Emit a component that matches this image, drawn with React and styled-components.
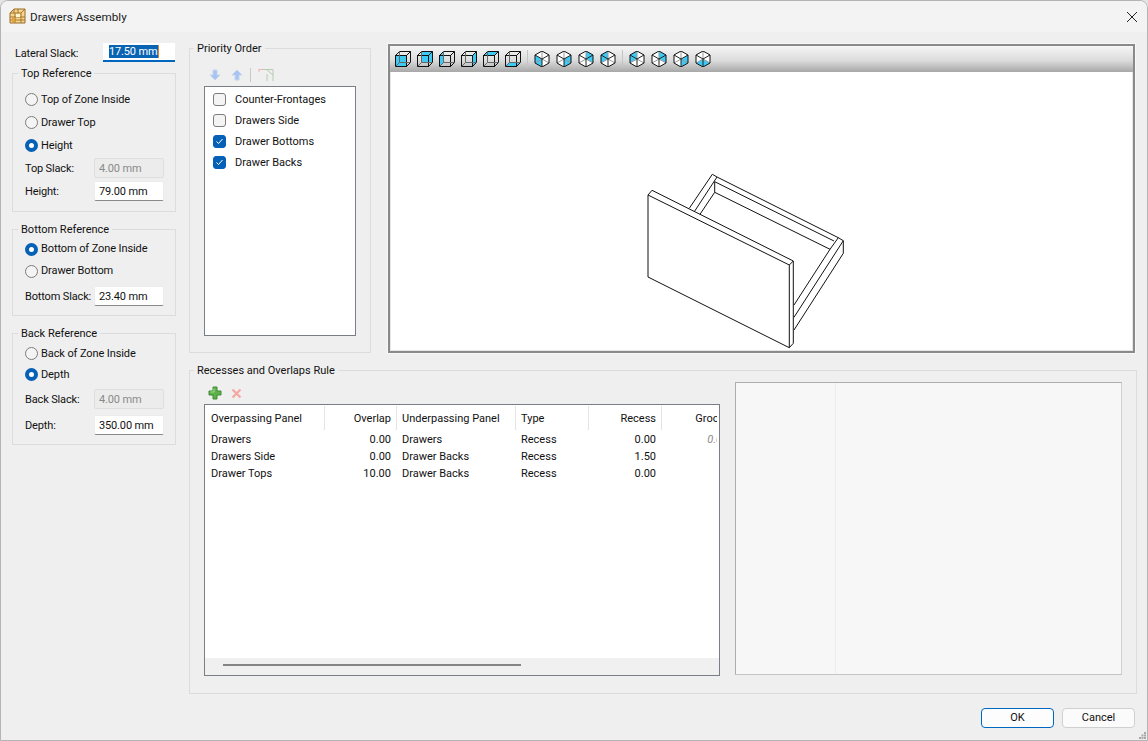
import React from "react";
import styled, { createGlobalStyle } from "styled-components";

const Global = createGlobalStyle`
  * { box-sizing: border-box; }
  html, body { margin: 0; padding: 0; background: #e4e4e4; }
  body { font: 11px/14px Roboto, "Noto Sans", sans-serif; color: #111; overflow: hidden; }
`;

const HEX = { ul: [1, 4], ur: [15, 4], lr: [15, 12], bt: [8, 16], ll: [1, 12], tp: [8, 0], c: [8, 8] };
const pts = (...names) => names.map((n) => HEX[n].join(",")).join(" ");

const BOX_FACES = {
  front: "0.5,4.5 11.5,4.5 11.5,15.5 0.5,15.5",
  back: "4.5,0.5 15.5,0.5 15.5,11.5 4.5,11.5",
  left: "0.5,4.5 4.5,0.5 4.5,11.5 0.5,15.5",
  right: "11.5,4.5 15.5,0.5 15.5,11.5 11.5,15.5",
  top: "0.5,4.5 4.5,0.5 15.5,0.5 11.5,4.5",
  bottom: "0.5,15.5 4.5,11.5 15.5,11.5 11.5,15.5",
};

const ISO_FACES = {
  a: pts("ul", "c", "bt", "ll"),
  b: pts("c", "ur", "lr", "bt"),
  c: "8,8 8,0 15,4 15,12",
  d: "8,8 8,0 1,4 1,12",
  e: pts("tp", "c", "ll", "ul"),
  f: pts("tp", "ur", "lr", "c"),
  g: "8,8 15,4 15,12 8,16",
  h: "1,12 8,8 15,12 8,16",
};

const BoxIcon = ({ face }) => (
  <svg width="16" height="16" viewBox="0 0 16 16">
    <polygon points={BOX_FACES[face]} fill="#3fcaf4" />
    <g fill="none" stroke="#111" strokeWidth="1">
      <rect x="0.5" y="4.5" width="11" height="11" />
      <path d="M0.5 4.5 L4.5 0.5 H15.5 V11.5 L11.5 15.5 M11.5 4.5 L15.5 0.5" />
      <path d="M4.5 0.5 V11.5 H15.5 M4.5 11.5 L0.5 15.5" stroke="#666" />
    </g>
  </svg>
);

const IsoIcon = ({ face }) => (
  <svg width="16" height="16" viewBox="0 0 16 16">
    <polygon points={pts("tp", "ur", "lr", "bt", "ll", "ul")} fill="#fff" />
    <polygon points={ISO_FACES[face]} fill="#3fcaf4" />
    <path d="M8 8 L1 12 M8 8 L15 12 M8 8 V0" stroke="#999" fill="none" />
    <path d="M8 8 L1 4 M8 8 L15 4 M8 8 V16" stroke="#222" fill="none" />
    <polygon points={pts("tp", "ur", "lr", "bt", "ll", "ul")} fill="none" stroke="#111" />
  </svg>
);

const TitleIcon = () => (
  <svg width="17" height="17" viewBox="0 0 17 17">
    <path d="M1 5 L5 1 H16 V15 H1 Z" fill="#f3d693" stroke="#9b6a22" />
    <path d="M1 5 H12 V15 M5 1 V5 M9 1 V5 M12 5 L16 1 M1 9 H12 M1 12 H12 M6 5 V15 M12 9 H16 M12 12 H16" fill="none" stroke="#a8742a" />
    <rect x="3" y="10" width="3" height="4" fill="#e2a23c" />
    <rect x="7" y="6" width="4" height="3" fill="#fff3d0" />
  </svg>
);

const ArrowIcon = ({ up }) => (
  <svg width="12" height="12" viewBox="0 0 12 12">
    <polygon
      points={up ? "6,1 11,6 8,6 8,11 4,11 4,6 1,6" : "6,11 11,6 8,6 8,1 4,1 4,6 1,6"}
      fill="#a9c4f0"
      stroke="#c3d4ef"
    />
  </svg>
);

const FilterIcon = () => (
  <svg width="16" height="14" viewBox="0 0 16 14">
    <path d="M1 1.500 H15 V13 M8.500 1.500 L15 7 M9 6 V13" fill="none" stroke="#b4ccb0" />
    <path d="M1 1.500 H5 M1 1 V4" fill="none" stroke="#eeb4b8" />
  </svg>
);

const PlusIcon = () => (
  <svg width="14" height="14" viewBox="0 0 14 14">
    <polygon points="5,1 9,1 9,5 13,5 13,9 9,9 9,13 5,13 5,9 1,9 1,5 5,5" fill="#5db14a" stroke="#3e8a33" />
    <path d="M6 2.500 V6 H2.500" stroke="#a6dc94" fill="none" />
  </svg>
);

const CrossIcon = () => (
  <svg width="11" height="11" viewBox="0 0 11 11">
    <path d="M1.500 1.500 L9.500 9.500 M9.500 1.500 L1.500 9.500" stroke="#f4a89f" strokeWidth="2.2" />
  </svg>
);

const DrawerDrawing = () => (
  <svg width="100%" height="100%" viewBox="391 72 741 278" fill="none" stroke="#111" strokeWidth="1">
    <path d="M648 195 L789.3 265 V347.7 L648 277 Z" />
    <path d="M648 195 L652 190.3 L793.3 261 L789.3 265 M793.3 261 V343.3 L789.3 347.7" />
    <path d="M689.3 208.3 L712.3 174.3 L717 177 L694.3 211.7" />
    <path d="M700 214.3 L714.7 192.3 V181.7 M717 177 L838.3 237.7 L843.3 240.7 V253.3" />
    <path d="M714.7 181.7 L834 241 M714.7 192.3 L830 249.3 M838.3 237.7 L830 249.3" />
    <path d="M830 249.3 L794 305 M843.3 240.7 L794 317.3 M843.3 253.3 L794 330" />
  </svg>
);

const ROWS = [
  ["Drawers", "0.00", "Drawers", "Recess", "0.00", "0.00"],
  ["Drawers Side", "0.00", "Drawer Backs", "Recess", "1.50", ""],
  ["Drawer Tops", "10.00", "Drawer Backs", "Recess", "0.00", ""],
];

const COLS = ["Overpassing Panel", "Overlap", "Underpassing Panel", "Type", "Recess", "Groove"];
const isNum = (i) => i === 1 || i === 4 || i === 5;

export default function App() {
  return (
    <Window>
      <Global />
      <TitleBar>
        <TitleIcon />
        <TitleText>Drawers Assembly</TitleText>
        <svg width="12" height="12" viewBox="0 0 12 12">
          <path d="M1 1 L11 11 M11 1 L1 11" stroke="#222" strokeWidth="1" />
        </svg>
      </TitleBar>

      <Body>
        <LeftColumn>
          <LateralRow>
            <FieldLabel>Lateral Slack:</FieldLabel>
            <LateralInput><Selected>17.50 mm</Selected></LateralInput>
          </LateralRow>

          <SideGroup $pt={8} $pb={10} $mt={4}>
            <legend>Top Reference</legend>
            <RadioRow $h={23}><Radio name="top" />Top of Zone Inside</RadioRow>
            <RadioRow $h={23}><Radio name="top" />Drawer Top</RadioRow>
            <RadioRow $h={23}><Radio name="top" defaultChecked />Height</RadioRow>
            <FieldRow $mt={1}><FieldLabel>Top Slack:</FieldLabel><NumInput disabled defaultValue="4.00 mm" /></FieldRow>
            <FieldRow $mt={3}><FieldLabel>Height:</FieldLabel><NumInput defaultValue="79.00 mm" /></FieldRow>
          </SideGroup>

          <SideGroup $pt={2} $pb={9} $mt={10}>
            <legend>Bottom Reference</legend>
            <RadioRow $h={22}><Radio name="bottom" defaultChecked />Bottom of Zone Inside</RadioRow>
            <RadioRow $h={22}><Radio name="bottom" />Drawer Bottom</RadioRow>
            <FieldRow $mt={4}><FieldLabel>Bottom Slack:</FieldLabel><NumInput defaultValue="23.40 mm" /></FieldRow>
          </SideGroup>

          <SideGroup $pt={3} $pb={9} $mt={10}>
            <legend>Back Reference</legend>
            <RadioRow $h={21}><Radio name="back" />Back of Zone Inside</RadioRow>
            <RadioRow $h={21}><Radio name="back" defaultChecked />Depth</RadioRow>
            <FieldRow $mt={4}><FieldLabel>Back Slack:</FieldLabel><NumInput disabled defaultValue="4.00 mm" /></FieldRow>
            <FieldRow $mt={6}><FieldLabel>Depth:</FieldLabel><NumInput defaultValue="350.00 mm" /></FieldRow>
          </SideGroup>
        </LeftColumn>

        <RightColumn>
          <TopRow>
            <PriorityGroup>
              <legend>Priority Order</legend>
              <PriorityTools>
                <ArrowIcon />
                <ArrowIcon up />
                <ToolSep />
                <FilterIcon />
              </PriorityTools>
              <PriorityList>
                <PriorityItem><Check />Counter-Frontages</PriorityItem>
                <PriorityItem><Check />Drawers Side</PriorityItem>
                <PriorityItem><Check defaultChecked />Drawer Bottoms</PriorityItem>
                <PriorityItem><Check defaultChecked />Drawer Backs</PriorityItem>
              </PriorityList>
            </PriorityGroup>

            <Viewport>
              <ViewToolbar>
                {["front", "back", "left", "right", "top", "bottom"].map((f) => (
                  <BoxIcon key={f} face={f} />
                ))}
                <ViewSep />
                {["a", "b", "c", "d"].map((f) => (
                  <IsoIcon key={f} face={f} />
                ))}
                <ViewSep />
                {["e", "f", "g", "h"].map((f) => (
                  <IsoIcon key={f} face={f} />
                ))}
              </ViewToolbar>
              <Canvas>
                <DrawerDrawing />
              </Canvas>
            </Viewport>
          </TopRow>

          <RulesGroup>
            <legend>Recesses and Overlaps Rule</legend>
            <RulesInner>
              <RulesLeft>
                <RulesTools>
                  <PlusIcon />
                  <CrossIcon />
                </RulesTools>
                <Table>
                  <TableClip>
                    <HeadRow>
                      {COLS.map((c, i) => (
                        <HeadCell key={c} $num={isNum(i)}>{c}</HeadCell>
                      ))}
                    </HeadRow>
                    {ROWS.map((r) => (
                      <DataRow key={r[0]}>
                        {r.map((v, i) => (
                          <DataCell key={i} $num={isNum(i)} $muted={i === 5}>{v}</DataCell>
                        ))}
                      </DataRow>
                    ))}
                  </TableClip>
                  <ScrollTrack><ScrollThumb /></ScrollTrack>
                </Table>
              </RulesLeft>
              <Preview><PreviewPane /></Preview>
            </RulesInner>
          </RulesGroup>
        </RightColumn>
      </Body>

      <Footer>
        <DialogButton $primary>OK</DialogButton>
        <DialogButton>Cancel</DialogButton>
        <Grip width="7" height="7" viewBox="0 0 7 7">
          <path d="M5 0h2v2H5z M2.500 2.500h2v2h-2z M5 2.500h2v2H5z M0 5h2v2H0z M2.500 5h2v2h-2z M5 5h2v2H5z" fill="#a8a8a8" />
        </Grip>
      </Footer>
    </Window>
  );
}

const Window = styled.div`
  position: relative;
  width: 1148px;
  height: 741px;
  display: flex;
  flex-direction: column;
  background: #efefef;
  border: 1px solid #b4b4b4;
  border-radius: 8px 8px 0 0;
  overflow: hidden;
`;

const TitleBar = styled.div`
  height: 31px;
  flex: none;
  display: flex;
  align-items: center;
  padding: 0 9px 0 8px;
  background: #f3f3f3;
`;

const TitleText = styled.span`
  margin-left: 4px;
  font-size: 11.7px;
  flex: 1;
  color: #222;
`;

const Body = styled.div`
  display: flex;
  gap: 13px;
  padding: 9px 10px 0 11px;
`;

const LeftColumn = styled.div`
  width: 164px;
  flex: none;
  padding-top: 2px;
  display: flex;
  flex-direction: column;
`;

const FieldLabel = styled.span`
  padding-top: 2px;
  letter-spacing: -0.15px;
  white-space: nowrap;
`;

const LateralRow = styled.div`
  display: flex;
  align-items: center;
  justify-content: space-between;
  height: 19px;
  padding-left: 3px;
  margin-right: 1px;
`;

const LateralInput = styled.div`
  width: 72px;
  height: 19px;
  background: #fff;
  border-bottom: 2px solid #0067c0;
  padding: 2px 0 0 6px;
`;

const Selected = styled.span`
  background: #0a64b4;
  color: #fff;
  display: inline-block;
  height: 13px;
  line-height: 13px;
  letter-spacing: -0.15px;
  padding-right: 1px;
  border-right: 1px solid #d9822b;
`;

const Group = styled.fieldset`
  margin: 0;
  min-width: 0;
  border: 1px solid #dcdcdc;

  legend {
    padding: 0 3px;
    height: 14px;
    line-height: 16px;
  }
`;

const SideGroup = styled(Group)`
  margin-top: ${(p) => p.$mt}px;
  padding: ${(p) => p.$pt}px 11px ${(p) => p.$pb}px 12px;

  legend {
    margin-left: -7px;
  }
`;

const RadioRow = styled.label`
  display: flex;
  align-items: center;
  height: ${(p) => p.$h}px;
  white-space: nowrap;
  letter-spacing: -0.1px;
`;

const Radio = styled.input.attrs({ type: "radio" })`
  appearance: none;
  width: 13px;
  height: 13px;
  margin: 0 3px 0 0;
  flex: none;
  border-radius: 50%;
  border: 1px solid #7c7c7c;
  background: #f4f4f4;

  &:checked {
    border: 4px solid #0560b6;
    background: #fff;
  }
`;

const FieldRow = styled.div`
  display: flex;
  align-items: center;
  justify-content: space-between;
  height: 20px;
  margin-top: ${(p) => p.$mt}px;
`;

const NumInput = styled.input`
  width: 70px;
  height: 20px;
  flex: none;
  padding: 0 0 0 4px;
  font: inherit;
  letter-spacing: -0.15px;
  color: #111;
  background: #fff;
  border: 1px solid #ececec;
  border-bottom: 1px solid #8a8a8a;
  border-radius: 2px;
  outline: none;

  &:disabled {
    color: #8a8a8a;
    background: #ececec;
    border: 1px solid #dedede;
    opacity: 1;
  }
`;

const RightColumn = styled.div`
  flex: 1;
  min-width: 0;
  display: flex;
  flex-direction: column;
  gap: 10px;
`;

const TopRow = styled.div`
  display: flex;
  gap: 17px;
  height: 312px;
`;

const PriorityGroup = styled(Group)`
  width: 182px;
  flex: none;
  padding: 9px 0 16px 14px;
  display: flex;
  flex-direction: column;

  legend {
    margin-left: -10px;
  }
`;

const PriorityTools = styled.div`
  display: flex;
  align-items: center;
  height: 22px;
  padding-left: 5px;
  gap: 10px;
`;

const ToolSep = styled.span`
  width: 1px;
  height: 14px;
  background: #c8c8c8;
  margin: 0 -3px;
`;

const PriorityList = styled.div`
  width: 152px;
  height: 250px;
  background: #fff;
  border: 1px solid #7a7f87;
  padding-top: 2px;
`;

const PriorityItem = styled.label`
  display: flex;
  align-items: center;
  height: 21px;
  padding-left: 8px;
`;

const Check = styled.input.attrs({ type: "checkbox" })`
  appearance: none;
  width: 13px;
  height: 13px;
  margin: 0 9px 0 0;
  flex: none;
  border-radius: 3px;
  border: 1px solid #7c7c7c;
  background: #f4f4f4;

  &:checked {
    border-color: #0560b6;
    background: #0560b6 url("data:image/svg+xml,%3Csvg xmlns='http://www.w3.org/2000/svg' viewBox='0 0 11 11'%3E%3Cpath d='M2.500 5.500l2 2 4-4.500' fill='none' stroke='white'/%3E%3C/svg%3E") center/11px no-repeat;
  }
`;

const Viewport = styled.div`
  flex: 1;
  margin: 3px 2px 0 0;
  display: flex;
  flex-direction: column;
  border: 2px solid #8a8a8a;
  outline: 1px solid #f8f8f8;
  background: #fff;
`;

const ViewToolbar = styled.div`
  height: 26px;
  flex: none;
  display: flex;
  align-items: center;
  gap: 6px;
  padding: 0 0 0 5px;
  background: linear-gradient(#f6f6f6, #dcdcdc 55%, #a8a8a8);
`;

const ViewSep = styled.span`
  width: 1px;
  height: 18px;
  background: #c4c4c4;
`;

const Canvas = styled.div`
  flex: 1;
  min-height: 0;
  border: 1px solid #e6e6e6;
  border-width: 0 1px 1px 1px;
  overflow: hidden;
  line-height: 0;
`;

const RulesGroup = styled(Group)`
  height: 331px;
  padding: 5px 14px 0 14px;

  legend {
    margin-left: -10px;
  }
`;

const RulesInner = styled.div`
  display: flex;
  gap: 15px;
`;

const RulesLeft = styled.div`
  width: 516px;
  flex: none;
  display: flex;
  flex-direction: column;
`;

const RulesTools = styled.div`
  height: 22px;
  display: flex;
  align-items: center;
  gap: 9px;
  padding-left: 4px;
`;

const Table = styled.div`
  height: 272px;
  display: flex;
  flex-direction: column;
  background: #fff;
  border: 1px solid #7a7f87;
`;

const TableClip = styled.div`
  flex: 1;
  margin-right: 2px;
  overflow: hidden;
`;

const rowGrid = `
  display: grid;
  grid-template-columns: 120px 72px 119px 73px 73px 73px;
  width: 530px;
`;

const HeadRow = styled.div`
  ${rowGrid}
  height: 26px;
`;

const cellPadding = (p) => (p.$num ? "0 6px 0 0" : "0 0 0 5px");

const HeadCell = styled.div`
  margin: 1px 0;
  padding: ${(p) => (p.$num ? "0 5px 0 0" : "0 0 0 5px")};
  text-align: ${(p) => (p.$num ? "right" : "left")};
  line-height: 26px;
  height: 24px;
  border-right: 1px solid #e4e4e4;

  &:first-child {
    padding-left: 6px;
  }

  &:last-child {
    border-right: 0;
  }
`;

const DataRow = styled.div`
  ${rowGrid}
  height: 17px;
`;

const DataCell = styled.div`
  padding: ${cellPadding};
  text-align: ${(p) => (p.$num ? "right" : "left")};
  line-height: 17px;
  ${(p) => p.$muted && "font-style: italic; color: #8a8a8a; padding-right: 7px;"}

  &:first-child {
    padding-left: 6px;
  }
`;

const ScrollTrack = styled.div`
  height: 17px;
  flex: none;
  background: #f0f0f0;
  padding: 6px 0 0 18px;
`;

const ScrollThumb = styled.div`
  width: 298px;
  height: 2px;
  background: #858585;
`;

const Preview = styled.div`
  width: 387px;
  height: 293px;
  background: #f7f7f7;
  border: 1px solid #adadad;
  border-color: #adadad #d0d0d0 #c4c4c4 #adadad;
`;

const PreviewPane = styled.div`
  width: 100px;
  height: 100%;
  border-right: 1px solid #ececec;
`;

const Footer = styled.div`
  display: flex;
  justify-content: flex-end;
  gap: 8px;
  padding: 14px 12px 0 0;
`;

const DialogButton = styled.button`
  width: 73px;
  height: 20px;
  padding: 0;
  font: inherit;
  color: #111;
  border-radius: 4px;
  background: ${(p) => (p.$primary ? "#fdfdfd" : "#fbfbfb")};
  border: 1px solid ${(p) => (p.$primary ? "#0067c0" : "#d0d0d0")};
`;

const Grip = styled.svg`
  position: absolute;
  right: 1px;
  bottom: 1px;
`;
